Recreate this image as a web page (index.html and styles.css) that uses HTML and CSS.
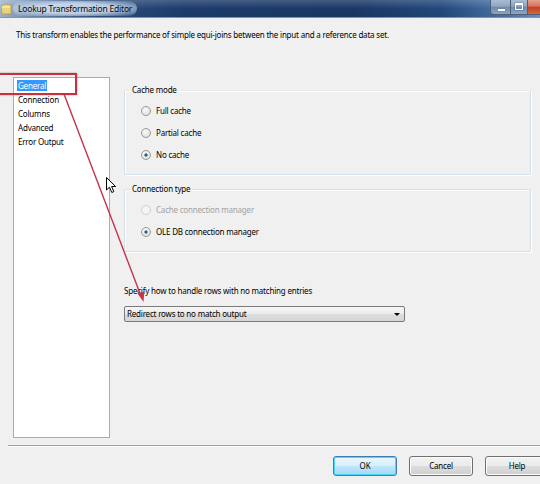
FILE: index.html
```html
<!DOCTYPE html>
<html>
<head>
<meta charset="utf-8">
<link rel="stylesheet" href="styles.css">
</head>
<body>
<div class="window">
  <div class="titlebar">
    <svg class="app-icon" width="11" height="12" viewBox="0 0 11 12">
      <path d="M0 3 L4 1 L10 2 L10 11 L1 11 Z" fill="#e8d27a" stroke="#b49a3c" stroke-width="0.8"/>
      <path d="M1 4 L9 4" stroke="#fff6c8" stroke-width="1"/>
    </svg>
    <span class="title">Lookup Transformation Editor</span>
    <div class="controls">
      <div class="ctl ctl-min"><span class="min-glyph"></span></div>
      <div class="ctl ctl-max"><span class="max-glyph"></span></div>
      <div class="ctl ctl-close"></div>
    </div>
  </div>

  <div class="desc">This transform enables the performance of simple equi-joins between the input and a reference data set.</div>

  <div class="content">
    <div class="list">
      <div class="item"><span class="sel">General</span></div>
      <div class="item"><span>Connection</span></div>
      <div class="item"><span>Columns</span></div>
      <div class="item"><span>Advanced</span></div>
      <div class="item"><span>Error Output</span></div>
    </div>

    <div class="panel">
      <div class="group group-cache">
        <div class="legend">Cache mode</div>
        <div class="radio-row"><span class="radio"></span><span>Full cache</span></div>
        <div class="radio-row"><span class="radio"></span><span>Partial cache</span></div>
        <div class="radio-row"><span class="radio checked"></span><span>No cache</span></div>
      </div>

      <div class="group group-conn">
        <div class="legend">Connection type</div>
        <div class="radio-row disabled"><span class="radio"></span><span>Cache connection manager</span></div>
        <div class="radio-row"><span class="radio checked"></span><span>OLE DB connection manager</span></div>
      </div>

      <div class="specify">Specify how to handle rows with no matching entries</div>
      <div class="combo">
        <span>Redirect rows to no match output</span>
        <span class="combo-arrow"></span>
      </div>
    </div>
  </div>

  <div class="separator"></div>

  <div class="buttons">
    <div class="btn btn-default">OK</div>
    <div class="btn">Cancel</div>
    <div class="btn">Help</div>
  </div>

  <div class="callout"></div>
  <svg class="arrow" width="540" height="484" viewBox="0 0 540 484">
    <line x1="64" y1="94" x2="141" y2="296" stroke="#c4344a" stroke-width="1.4"/>
    <path d="M143.5 302 L137.6 293.6 L144.3 291.2 Z" fill="#c4344a"/>
  </svg>
  <svg class="cursor" width="12" height="18" viewBox="0 0 12 18">
    <path d="M0.5 0.5 L0.5 13 L3.5 10.2 L5.8 15.5 L7.8 14.6 L5.6 9.5 L9.6 9.5 Z" fill="#fff" stroke="#000" stroke-width="1"/>
  </svg>
</div>
</body>
</html>
```

FILE: styles.css
```css
* { box-sizing: border-box; }

html, body {
  margin: 0;
  padding: 0;
}

body {
  width: 540px;
  height: 484px;
  overflow: hidden;
  background: #f0f0f0;
  font-family: "Noto Sans", "Open Sans", sans-serif;
  font-size: 8px;
  letter-spacing: -0.2px;
  line-height: 12px;
  color: #000;
}

.window {
  position: relative;
  width: 540px;
  height: 484px;
  overflow: hidden;
}

/* Title bar */
.titlebar {
  height: 18px;
  display: flex;
  align-items: center;
  background:
    linear-gradient(180deg, rgba(255,255,255,0.18) 0, rgba(255,255,255,0) 50%, rgba(0,0,0,0.05) 100%),
    linear-gradient(90deg, #a3b8d0 0, #6f8db3 6%, #2d4f80 18%, #1d3c6b 35%, #1a3866 65%, #23497c 82%, #4d78ab 94%, #6f96c4 100%);
  border-bottom: 1px solid #7e95b0;
}

.app-icon {
  margin-left: 1px;
  flex: none;
}

.title {
  margin-left: 1px;
  padding: 0 5px;
  font-size: 8.5px;
  color: #0a0a0a;
  background: radial-gradient(ellipse at center, rgba(215,228,243,0.85) 45%, rgba(200,218,238,0.45) 75%, rgba(200,218,238,0) 100%);
  line-height: 15px;
  border-radius: 8px;
}

.controls {
  margin-left: auto;
  display: flex;
  align-self: flex-start;
  height: 15px;
}

.ctl {
  height: 15px;
  border: 1px solid #4c5e78;
  border-top: none;
  position: relative;
}

.ctl-min {
  width: 21px;
  border-radius: 0 0 0 4px;
  background: linear-gradient(180deg, #a9bcd3 0, #8fa6c2 45%, #6f8aae 50%, #8aa6c9 100%);
}

.ctl-max {
  width: 17px;
  border-left: none;
  background: linear-gradient(180deg, #a9bcd3 0, #8fa6c2 45%, #6f8aae 50%, #8aa6c9 100%);
}

.ctl-close {
  width: 12px;
  border-left: none;
  border-right: none;
  background: linear-gradient(180deg, #e6a08f 0, #d5705a 45%, #c23f22 50%, #d4653f 100%);
}

.min-glyph {
  position: absolute;
  left: 7px;
  top: 9px;
  width: 7px;
  height: 2px;
  background: #fff;
  box-shadow: 0 0 1px #333;
}

.max-glyph {
  position: absolute;
  left: 4px;
  top: 3px;
  width: 8px;
  height: 7px;
  border: 1px solid #fff;
  border-top-width: 2px;
  box-shadow: 0 0 1px #333;
}

/* Description */
.desc {
  padding: 11px 0 0 16px;
}

/* Main content */
.content {
  display: flex;
  margin-top: 36px;
  padding-left: 13px;
  height: 361px;
}

.list {
  width: 97px;
  height: 361px;
  background: #fff;
  border: 1px solid #a5acb5;
  padding-top: 0;
}

.item {
  height: 14px;
  display: flex;
  align-items: center;
  padding-left: 3px;
}

.item span {
  display: inline-block;
  line-height: 11px;
  padding: 0 1px;
}

.item .sel {
  background: #3399ff;
  color: #fff;
}

.panel {
  margin-left: 14px;
  width: 407px;
  display: flex;
  flex-direction: column;
}

.group {
  display: flex;
  flex-direction: column;
  border: 1px solid #d5dfe5;
  box-shadow: inset 1px 1px 0 #fff, 1px 1px 0 #fff;
  border-radius: 2px;
}

.group-cache {
  margin-top: 13px;
  height: 85px;
  border-top-color: #e6ebee;
}

.group-conn {
  margin-top: 14px;
  height: 63px;
}

.legend {
  margin: -7px 0 4px 5px;
  padding: 0 2px;
  height: 12px;
  line-height: 12px;
  align-self: flex-start;
  background: #f0f0f0;
}

.radio-row {
  height: 22px;
  flex: none;
  display: flex;
  align-items: center;
  padding-left: 16px;
}

.radio {
  width: 10px;
  height: 10px;
  border-radius: 50%;
  border: 1px solid #9a9a9a;
  background: radial-gradient(circle at 40% 35%, #fafafa 0, #e6e6e6 60%, #d4d4d4 100%);
  margin-right: 5px;
  flex: none;
}

.radio.checked {
  background:
    radial-gradient(circle at 50% 50%, #1f5a6e 0, #2b6f86 25%, rgba(43,111,134,0) 32%),
    radial-gradient(circle at 40% 35%, #fafafa 0, #e6e6e6 60%, #d4d4d4 100%);
}

.radio-row.disabled {
  color: #a3a3a3;
}

.radio-row.disabled .radio {
  border-color: #cfcfcf;
  background: #f4f4f4;
}

.specify {
  margin-top: 33px;
}

.combo {
  margin-top: 9px;
  width: 281px;
  height: 16px;
  border: 1px solid #7a7a7a;
  border-radius: 2px;
  background: linear-gradient(180deg, #f6f6f6 0, #ebebeb 50%, #dddddd 51%, #d6d6d6 100%);
  display: flex;
  align-items: center;
  padding-left: 2px;
}

.combo-arrow {
  margin-left: auto;
  margin-right: 4px;
  width: 0;
  height: 0;
  border-left: 3px solid transparent;
  border-right: 3px solid transparent;
  border-top: 3px solid #000;
}

/* Bottom */
.separator {
  margin: 7px 0 0 8px;
  border-top: 1px solid #a0a0a0;
  border-bottom: 1px solid #fff;
}

.buttons {
  display: flex;
  justify-content: flex-end;
  gap: 12px;
  margin-top: 9px;
  margin-right: -9px;
}

.btn {
  width: 64px;
  height: 20px;
  border: 1px solid #707070;
  border-radius: 3px;
  background: linear-gradient(180deg, #f2f2f2 0, #ebebeb 48%, #dddddd 52%, #cfcfcf 100%);
  display: flex;
  align-items: center;
  justify-content: center;
  box-shadow: inset 0 0 0 1px #fcfcfc;
}

.btn-default {
  border-color: #3c7fb1;
  box-shadow: inset 0 0 0 1px #48d8fb;
  background: linear-gradient(180deg, #eaf6fd 0, #d9f0fc 48%, #bee6fd 52%, #a7d9f5 100%);
}

/* Overlays: annotation callout box, arrow, mouse cursor */
.callout {
  position: absolute;
  left: -4px;
  top: 73px;
  width: 81px;
  height: 22px;
  border: 2px solid #c9303e;
  box-shadow: 0 0 2px rgba(0,0,0,0.35);
}

.arrow {
  position: absolute;
  left: 0;
  top: 0;
  pointer-events: none;
}

.cursor {
  position: absolute;
  left: 106px;
  top: 177px;
}
```
